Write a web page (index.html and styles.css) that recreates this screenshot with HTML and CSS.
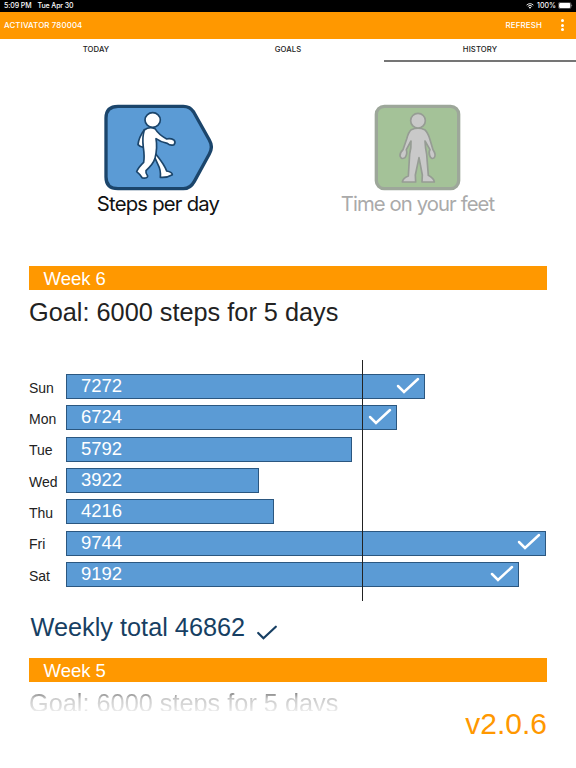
FILE: index.html
```
<!DOCTYPE html>
<html lang="en">

<head>
    <meta charset="UTF-8">
    <meta name="viewport" content="width=device-width, initial-scale=1">
    <title>Activator - History</title>
    <link rel="stylesheet" href="styles.css">
</head>

<body>
    <!-- Device status bar -->
    <div class="status-bar">
        <span>5:09 PM</span>
        <span class="status-date">Tue Apr 30</span>
        <svg class="wifi" viewBox="0 0 16 12">
            <path d="M1.2 4.2a9.6 9.6 0 0 1 13.6 0M3.6 6.8a6.2 6.2 0 0 1 8.8 0" />
            <path class="dot" d="M5.6 8.8a3.4 3.4 0 0 1 4.8 0L8 11.5z" />
        </svg>
        <span>100%</span>
        <svg class="battery" viewBox="0 0 15 7">
            <rect class="outline" x="0.4" y="0.4" width="12.6" height="6.2" rx="1.6" />
            <rect x="1.1" y="1" width="11.2" height="5" rx="1" />
            <path d="M13.6 2.4q1.2 1.1 0 2.2z" />
        </svg>
    </div>

    <header class="app-bar">
        <span class="app-title">ACTIVATOR 780004</span>
        <button class="refresh">REFRESH</button>
        <button class="menu" aria-label="Menu"><i></i><i></i><i></i></button>
    </header>

    <nav class="tabs">
        <a>TODAY</a>
        <a>GOALS</a>
        <a class="active">HISTORY</a>
    </nav>

    <!-- Activity type selector -->
    <div class="activities">
        <div class="activity steps">
            <svg width="109" height="87" viewBox="42 27 327 261">
                <path class="frame" d="M84 34H280Q300 34 311 51L358 135Q370 156 358 177L313 259Q301 281 280 281H84Q48 281 48 246V69Q48 34 84 34Z" />
                <g class="person">
                    <path d="M163 110Q146 133 144 155Q151 163 160 163L169 130Z" transform="translate(0 -6)" />
                    <path d="M190 170Q194 191 204 209Q213 225 211 247Q230 249 247 239Q247 231 230 228Q224 210 199 179Z" />
                    <path d="M163 105Q177 94 195 101Q207 120 230 132Q241 129 252 135Q258 141 252 149Q241 153 232 145Q211 141 198 131Q203 159 195 190Q190 207 168 227Q166 234 173 243Q173 251 157 249Q149 237 140 230Q145 217 161 202Q164 185 160 157Q156 127 163 105Z" />
                    <ellipse cx="188" cy="75" rx="23" ry="22" />
                </g>
            </svg>
            <span>Steps per day</span>
        </div>
        <div class="activity feet">
            <svg width="87" height="87" viewBox="132 27 261 261">
                <rect class="frame" x="139" y="34" width="247" height="247" rx="24" />
                <g class="person">
                    <path d="M244 104Q264 95 284 104Q294 113 300 134L309 164Q319 178 313 188Q304 195 299 182Q295 170 300 164L285 138Q286 159 290 178L295 241Q312 250 313 261H276L277 240L267 188L256 240L257 261H217Q219 249 235 243L239 177Q244 158 243 138L229 164Q233 177 225 188Q214 195 210 183Q209 174 219 164L230 132Q236 110 244 104Z" />
                    <circle cx="264" cy="77" r="22" />
                </g>
            </svg>
            <span>Time on your feet</span>
        </div>
    </div>

    <main class="history">
        <section class="week">
            <h2>Week 6</h2>
            <p class="goal">Goal: 6000 steps for 5 days</p>
            <div class="chart">
                <div class="row"><span class="day">Sun</span>
                    <div class="bar" style="--steps: 7272">7272<svg class="check" viewBox="0 0 24 17"><path d="M2 9L8 15L22 2" /></svg></div>
                </div>
                <div class="row"><span class="day">Mon</span>
                    <div class="bar" style="--steps: 6724">6724<svg class="check" viewBox="0 0 24 17"><path d="M2 9L8 15L22 2" /></svg></div>
                </div>
                <div class="row"><span class="day">Tue</span>
                    <div class="bar" style="--steps: 5792">5792</div>
                </div>
                <div class="row"><span class="day">Wed</span>
                    <div class="bar" style="--steps: 3922">3922</div>
                </div>
                <div class="row"><span class="day">Thu</span>
                    <div class="bar" style="--steps: 4216">4216</div>
                </div>
                <div class="row"><span class="day">Fri</span>
                    <div class="bar" style="--steps: 9744">9744<svg class="check" viewBox="0 0 24 17"><path d="M2 9L8 15L22 2" /></svg></div>
                </div>
                <div class="row"><span class="day">Sat</span>
                    <div class="bar" style="--steps: 9192">9192<svg class="check" viewBox="0 0 24 17"><path d="M2 9L8 15L22 2" /></svg></div>
                </div>
                <div class="goal-line"></div>
            </div>
            <p class="total">Weekly total 46862 <svg class="check" viewBox="0 0 24 17"><path d="M2 9L8 15L22 2" /></svg></p>
        </section>
        <section class="week">
            <h2>Week 5</h2>
            <p class="goal faded">Goal: 6000 steps for 5 days</p>
        </section>
    </main>

    <footer class="version">v2.0.6</footer>
</body>

</html>
```
FILE: styles.css
```
* {
    box-sizing: border-box;
}

body {
    margin: 0;
    height: 768px;
    overflow: hidden;
    background: #fff;
    color: #222;
    font-family: "Liberation Sans", Arial, sans-serif;
}

h2,
p {
    margin: 0;
    font-weight: normal;
}

button {
    padding: 0;
    border: 0;
    background: none;
    color: inherit;
    font: inherit;
}

/* Status bar */
.status-bar {
    display: flex;
    align-items: center;
    height: 11.5px;
    padding: 0 4px;
    background: #000;
    color: #fff;
    font: 500 7px/11px Inter, sans-serif;
    letter-spacing: -0.1px;
}

.status-date {
    margin-left: 6px;
}

.wifi {
    width: 8px;
    height: 6px;
    margin: 0 3px 0 auto;
    fill: none;
    stroke: #fff;
    stroke-width: 1.8;
}

.wifi + span {
    letter-spacing: 0;
}

.wifi .dot {
    fill: #fff;
    stroke: none;
}

.battery {
    width: 15px;
    height: 7px;
    margin: 0 -1px 0 2px;
    fill: #fff;
}

.battery .outline {
    fill: none;
    stroke: #888;
    stroke-width: 0.6;
}

/* App bar */
.app-bar {
    display: flex;
    align-items: center;
    height: 27px;
    padding: 0 12px 0 4px;
    background: #ff9800;
    color: #fff;
    font: 500 7.9px/27px Inter, sans-serif;
}

.app-title {
    letter-spacing: 0.13px;
}

.refresh {
    margin-left: auto;
    letter-spacing: 0.15px;
}

.menu {
    display: flex;
    flex-direction: column;
    gap: 1.8px;
    margin-left: 19px;
}

.menu i {
    width: 3px;
    height: 3px;
    border-radius: 50%;
    background: #fff;
}

/* Tabs */
.tabs {
    display: grid;
    grid-template-columns: repeat(3, 1fr);
    height: 23.5px;
    font: 500 7.7px/22px Inter, sans-serif;
    letter-spacing: 0.1px;
    text-align: center;
}

.tabs a {
    height: 23px;
}

.tabs .active {
    border-bottom: 2px solid #757575;
}

/* Activity selector */
.activities {
    display: flex;
    height: 204px;
    padding-top: 42px;
}

.activity {
    display: flex;
    flex-direction: column;
    align-items: center;
    font: 20.3px/26px Inter, sans-serif;
    letter-spacing: -0.78px;
    white-space: nowrap;
}

.activity svg {
    display: block;
}

.frame {
    stroke-width: 10;
}

.person {
    stroke-width: 5;
    stroke-linejoin: round;
}

.steps {
    width: 125px;
    margin-left: 95.5px;
    color: #111;
}

.steps .frame {
    fill: #5b9bd5;
    stroke: #1b456b;
}

.steps .person {
    fill: #fff;
    stroke: #1b456b;
}

.feet {
    width: 160px;
    margin-left: 117px;
    color: #aaa;
    letter-spacing: -0.9px;
}

.feet .frame {
    fill: #a4c298;
    stroke: #9da79a;
}

.feet .person {
    fill: #c9c9c9;
    stroke: #969c94;
}

/* History */
.history {
    height: 444.5px;
    padding: 0 29px;
    overflow: hidden;
}

.week h2 {
    height: 23.5px;
    padding-left: 14.5px;
    background: #ff9800;
    color: #fff;
    font-size: 18.5px;
    line-height: 25px;
}

.goal {
    height: 70.5px;
    font-size: 25.3px;
    line-height: 44px;
    white-space: nowrap;
}

.faded {
    line-height: 43px;
    background: linear-gradient(#888 11px, #ccc 17px, #ddd 25px, #eee 30px);
    background-clip: text;
    color: transparent;
}

/* Chart */
.chart {
    position: relative;
    display: flex;
    flex-direction: column;
    gap: 6.35px;
    height: 241px;
    padding-top: 14px;
}

.row {
    display: flex;
    align-items: center;
    height: 25px;
}

.day {
    width: 37px;
    padding-top: 2px;
    font-size: 14px;
}

.bar {
    display: flex;
    align-items: center;
    justify-content: space-between;
    width: calc(var(--steps) * 0.0493px);
    height: 25px;
    padding: 0 4px 1px 14px;
    border: 1.5px solid #2b5780;
    background: #5b9bd5;
    color: #fff;
    font-size: 18.5px;
}

.check {
    width: 24px;
    height: 17px;
    fill: none;
    stroke: currentColor;
    stroke-width: 2.5;
    stroke-linecap: round;
}

.bar .check {
    margin-top: -2px;
}

.goal-line {
    position: absolute;
    top: 0;
    bottom: 0;
    left: 333px;
    width: 1px;
    background: #222;
}

.total {
    display: flex;
    align-items: center;
    height: 57px;
    padding: 0 0 5px 1.5px;
    color: #173f63;
    font-size: 25.3px;
}

.total .check {
    width: 22px;
    height: 15px;
    margin: 10px 0 0 11px;
}

/* Footer */
.version {
    padding: 0 29px;
    color: #ff9800;
    font-size: 30px;
    line-height: 25px;
    text-align: right;
}
```
